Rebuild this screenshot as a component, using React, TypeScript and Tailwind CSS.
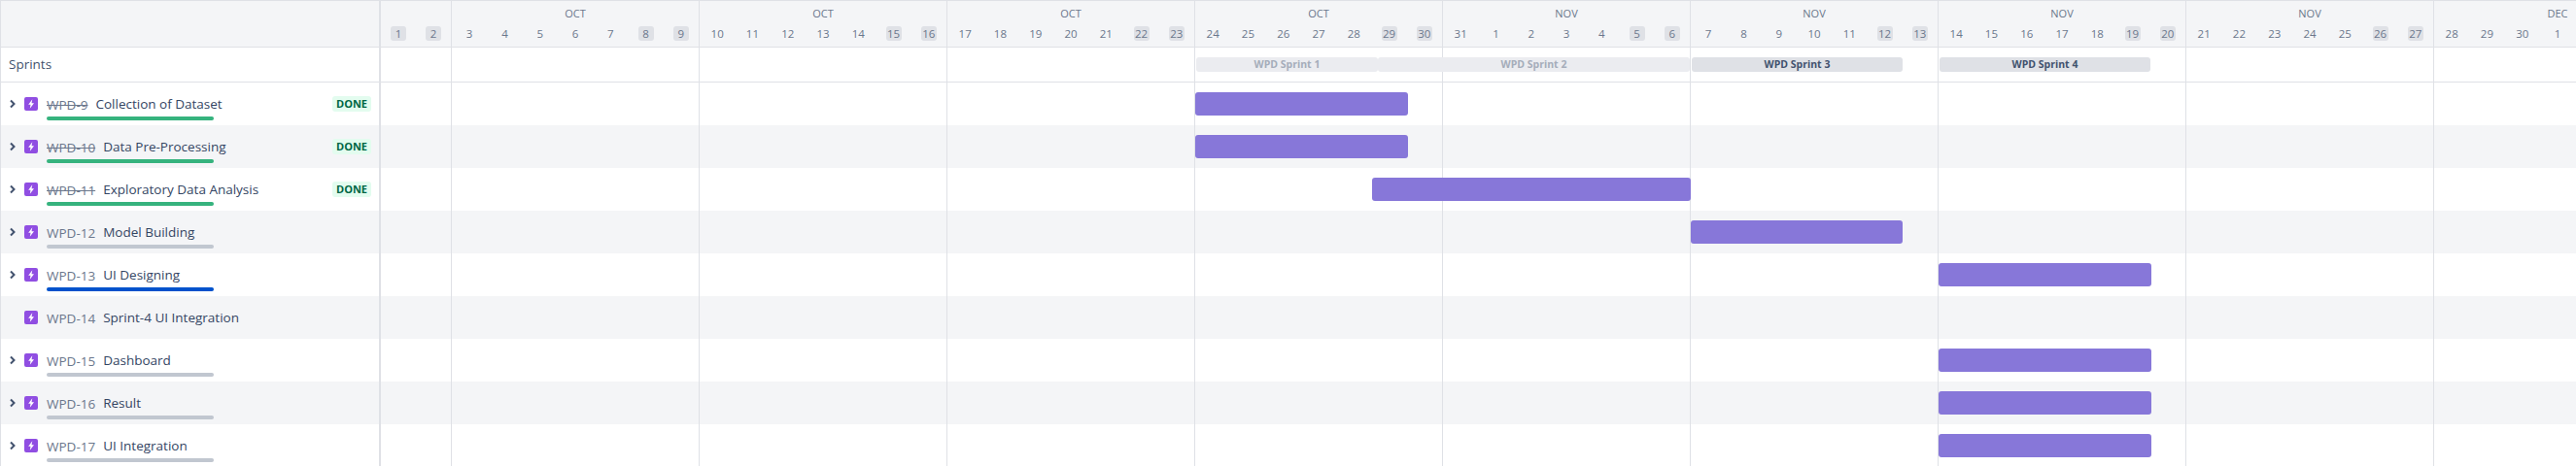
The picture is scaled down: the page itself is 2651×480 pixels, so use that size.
import React from 'react';

const weeks = [
  { month: 'OCT', days: [3, 4, 5, 6, 7, 8, 9] },
  { month: 'OCT', days: [10, 11, 12, 13, 14, 15, 16] },
  { month: 'OCT', days: [17, 18, 19, 20, 21, 22, 23] },
  { month: 'OCT', days: [24, 25, 26, 27, 28, 29, 30] },
  { month: 'NOV', days: [31, 1, 2, 3, 4, 5, 6] },
  { month: 'NOV', days: [7, 8, 9, 10, 11, 12, 13] },
  { month: 'NOV', days: [14, 15, 16, 17, 18, 19, 20] },
  { month: 'NOV', days: [21, 22, 23, 24, 25, 26, 27] },
  { month: 'DEC', days: [28, 29, 30, 1, 2, 3, 4] },
];

interface Issue {
  id: string;
  title: string;
  done?: boolean;
  progress?: string;
  bar?: string;
}

const issues: Issue[] = [
  { id: 'WPD-9', title: 'Collection of Dataset', done: true, progress: 'bg-[#36b37e]', bar: 'left-[838px] w-[219px]' },
  { id: 'WPD-10', title: 'Data Pre-Processing', done: true, progress: 'bg-[#36b37e]', bar: 'left-[838px] w-[219px]' },
  { id: 'WPD-11', title: 'Exploratory Data Analysis', done: true, progress: 'bg-[#36b37e]', bar: 'left-[1020px] w-[328px]' },
  { id: 'WPD-12', title: 'Model Building', progress: 'bg-[#c1c7d0]', bar: 'left-[1348px] w-[218px]' },
  { id: 'WPD-13', title: 'UI Designing', progress: 'bg-[#0052cc]', bar: 'left-[1603px] w-[219px]' },
  { id: 'WPD-14', title: 'Sprint-4 UI Integration' },
  { id: 'WPD-15', title: 'Dashboard', progress: 'bg-[#c1c7d0]', bar: 'left-[1603px] w-[219px]' },
  { id: 'WPD-16', title: 'Result', progress: 'bg-[#c1c7d0]', bar: 'left-[1603px] w-[219px]' },
  { id: 'WPD-17', title: 'UI Integration', progress: 'bg-[#c1c7d0]', bar: 'left-[1603px] w-[219px]' },
];

const sprints = [
  { name: 'WPD Sprint 1', cls: 'left-[839px] w-[187px] bg-[#ebecf0] text-[#a5adba]' },
  { name: 'WPD Sprint 2', cls: 'left-[1026px] w-[321px] bg-[#ebecf0] text-[#a5adba]' },
  { name: 'WPD Sprint 3', cls: 'left-[1349px] w-[217px] bg-[#dfe1e6] text-[#42526e]' },
  { name: 'WPD Sprint 4', cls: 'left-[1604px] w-[217px] bg-[#dfe1e6] text-[#42526e]' },
];

const DayCell: React.FC<{ day: number; weekend: boolean }> = ({ day, weekend }) => (
  <div className="flex-1 flex justify-center">
    <span className={`w-4 h-[15px] flex items-center justify-center rounded-[3px] text-[11.5px] text-[#6b778c] ${weekend ? 'bg-[#dfe1e6]' : ''}`}>
      {day}
    </span>
  </div>
);

// week columns, repeated behind every row so the vertical lines run through
const GridLines: React.FC = () => (
  <div className="flex h-full">
    <div className="w-[73px] shrink-0 border-r border-[#dfe1e6]" />
    {weeks.map((w, i) => (
      <div key={i} className="w-[255px] shrink-0 border-r border-[#dfe1e6]" />
    ))}
  </div>
);

const IssueIcon: React.FC = () => (
  <span className="w-[14px] h-[14px] rounded-[2px] bg-[#904ee2] flex items-center justify-center shrink-0">
    <svg width="14" height="14" viewBox="0 0 14 14">
      <path d="M8.3 2.3 4.2 7.8h2.3l-.7 4 4.2-5.6H7.5z" fill="#fff" />
    </svg>
  </span>
);

const Chevron: React.FC = () => (
  <svg width="8" height="10" viewBox="0 0 8 10" className="shrink-0">
    <path d="M2 1.5 5.5 5 2 8.5" fill="none" stroke="#42526e" strokeWidth="2" />
  </svg>
);

export default function App() {
  return (
    <div className="w-[2651px] h-[480px] overflow-hidden bg-white font-['Open_Sans',sans-serif] border-t border-l border-[#dfe1e6]">
      {/* header */}
      <div className="flex h-[48px] bg-[#f4f5f7] border-b border-[#dfe1e6]">
        <div className="w-[391px] shrink-0 border-r-2 border-[#dfe1e6]" />
        <div className="w-[73px] shrink-0 border-r border-[#dfe1e6] flex flex-col">
          <div className="h-[26px]" />
          <div className="flex">
            <DayCell day={1} weekend />
            <DayCell day={2} weekend />
          </div>
        </div>
        {weeks.map((w, i) => (
          <div key={i} className="w-[255px] shrink-0 border-r border-[#dfe1e6] flex flex-col">
            <div className="h-[26px] flex items-center justify-center text-[11px] text-[#6b778c]">{w.month}</div>
            <div className="flex">
              {w.days.map((d, j) => (
                <DayCell key={j} day={d} weekend={j >= 5} />
              ))}
            </div>
          </div>
        ))}
      </div>

      {/* sprints row */}
      <div className="flex h-[36px] border-b border-[#dfe1e6]">
        <div className="w-[391px] shrink-0 border-r-2 border-[#dfe1e6] flex items-center pl-2 text-[13.5px] text-[#42526e]">
          Sprints
        </div>
        <div className="relative flex-1">
          <GridLines />
          {sprints.map((s) => (
            <div key={s.name} className={`absolute top-[10px] h-[15px] rounded-[3px] flex items-center justify-center text-[10.5px] font-bold ${s.cls}`}>
              {s.name}
            </div>
          ))}
        </div>
      </div>

      {/* issues */}
      {issues.map((issue, i) => (
        <div key={issue.id} className={`flex h-[44px] ${i % 2 ? 'bg-[#f4f5f7]' : 'bg-white'}`}>
          <div className="w-[391px] shrink-0 border-r-2 border-[#dfe1e6] flex pl-2 pr-2 relative">
            <div className="w-[16px] flex items-center pb-[1px] shrink-0">{issue.progress && <Chevron />}</div>
            <div className="flex items-center h-[44px] shrink-0">
              <IssueIcon />
            </div>
            <div className="ml-[9px] flex-1 flex items-center gap-2 text-[13.5px]">
              <span className={`pt-[2px] text-[#6b778c] ${issue.done ? 'line-through' : ''}`}>{issue.id}</span>
              <span className="text-[#344563]">{issue.title}</span>
            </div>
            {issue.done && (
              <span className="self-center h-4 px-1 rounded-[3px] bg-[#e3fcef] text-[#006644] text-[11px] font-bold leading-4">DONE</span>
            )}
            {issue.progress && (
              <div className={`absolute left-[47px] top-[35px] w-[172px] h-1 rounded-full ${issue.progress}`} />
            )}
          </div>
          <div className="relative flex-1">
            <GridLines />
            {issue.bar && <div className={`absolute top-[10px] h-6 rounded-[3px] bg-[#8777d9] ${issue.bar}`} />}
          </div>
        </div>
      ))}
    </div>
  );
}
